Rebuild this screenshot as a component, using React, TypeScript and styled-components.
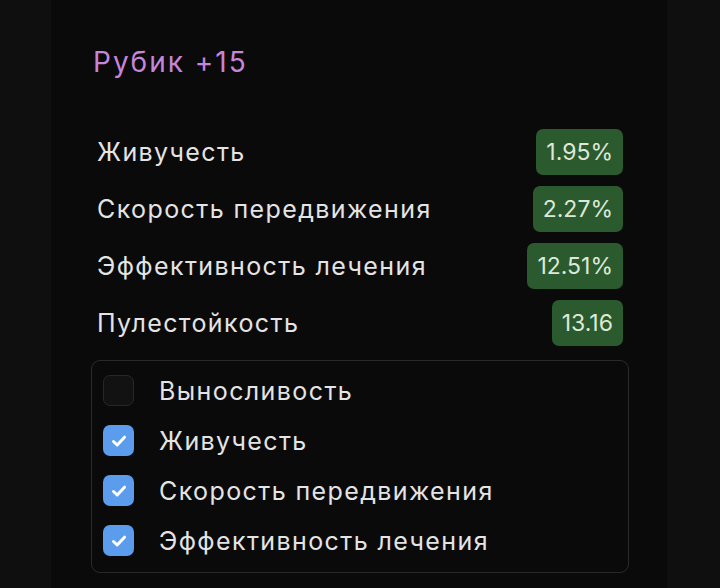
import React from 'react';
import styled, { createGlobalStyle } from 'styled-components';

const GlobalStyle = createGlobalStyle`
  html, body {
    margin: 0;
    padding: 0;
    background: #0f0f0f;
  }
  body {
    font-family: Inter, 'Open Sans', sans-serif;
    -webkit-font-smoothing: antialiased;
  }
`;

const Page = styled.div`
  height: 588px;
  overflow: hidden;
  padding-left: 51px;
`;

const Card = styled.section`
  width: 616px;
  min-height: 588px;
  box-sizing: border-box;
  background: #0a0a0a;
  padding: 42px 38px 0 40px;
`;

const Title = styled.h2`
  margin: 0 0 0 2px;
  font-size: 28px;
  letter-spacing: 2px;
  line-height: 40px;
  font-weight: 400;
  color: #c685dc;
`;

const StatList = styled.div`
  display: flex;
  flex-direction: column;
  gap: 11px;
  margin-top: 47px;
  padding: 0 6px;
`;

const StatRow = styled.div`
  display: flex;
  align-items: center;
  justify-content: space-between;
  height: 46px;
`;

const StatName = styled.span`
  font-size: 25px;
  letter-spacing: 1.4px;
  color: #e4e4e4;
`;

const Badge = styled.span`
  height: 46px;
  box-sizing: border-box;
  display: inline-flex;
  align-items: center;
  padding: 0 10px;
  border-radius: 7px;
  background: #2b5a2e;
  color: #dde8d9;
  font-size: 23px;
`;

const Panel = styled.div`
  margin-top: 14px;
  border: 1.5px solid #2a2a2a;
  border-radius: 9px;
  padding: 14px 11px 16px;
  display: flex;
  flex-direction: column;
  gap: 19px;
`;

const Option = styled.label`
  display: flex;
  align-items: center;
  gap: 25px;
  height: 31px;
  font-size: 25px;
  letter-spacing: 1.4px;
  color: #e4e4e4;
`;

const Box = styled.span<{ $checked: boolean }>`
  width: 31px;
  height: 31px;
  box-sizing: border-box;
  border-radius: 7px;
  flex-shrink: 0;
  display: inline-flex;
  align-items: center;
  justify-content: center;
  background: ${(p) => (p.$checked ? '#5c9cec' : '#121212')};
  border: ${(p) => (p.$checked ? 'none' : '1.5px solid #272727')};
`;

const Check = () => (
  <svg width="18" height="18" viewBox="0 0 18 18">
    <path
      d="M3.5 9.5 L7.2 13 L14.5 5.2"
      fill="none"
      stroke="#ffffff"
      strokeWidth="3"
      strokeLinecap="round"
      strokeLinejoin="round"
    />
  </svg>
);

const stats = [
  { name: 'Живучесть', value: '1.95%' },
  { name: 'Скорость передвижения', value: '2.27%' },
  { name: 'Эффективность лечения', value: '12.51%' },
  { name: 'Пулестойкость', value: '13.16' },
];

const options = [
  { name: 'Выносливость', checked: false },
  { name: 'Живучесть', checked: true },
  { name: 'Скорость передвижения', checked: true },
  { name: 'Эффективность лечения', checked: true },
];

export default function App() {
  return (
    <>
      <GlobalStyle />
      <Page>
        <Card>
          <Title>Рубик +15</Title>
          <StatList>
            {stats.map((s) => (
              <StatRow key={s.name}>
                <StatName>{s.name}</StatName>
                <Badge>{s.value}</Badge>
              </StatRow>
            ))}
          </StatList>
          <Panel>
            {options.map((o) => (
              <Option key={o.name}>
                <Box $checked={o.checked}>{o.checked && <Check />}</Box>
                {o.name}
              </Option>
            ))}
          </Panel>
        </Card>
      </Page>
    </>
  );
}
